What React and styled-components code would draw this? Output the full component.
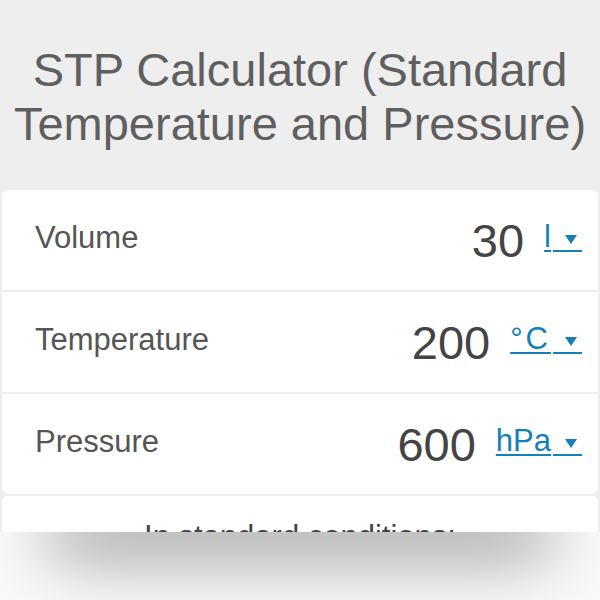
import React from "react";
import styled, { createGlobalStyle } from "styled-components";

const GlobalStyle = createGlobalStyle`
    html, body {
        margin: 0;
        padding: 0;
        background: #fafafa;
    }
    body {
        font-family: "Liberation Sans", Arial, sans-serif;
    }
`;

const rows = [
    { label: "Volume", value: "30", unit: "l" },
    { label: "Temperature", value: "200", unit: "°C", spaced: true },
    { label: "Pressure", value: "600", unit: "hPa" },
];

export default function App() {
    return (
        <Page>
            <GlobalStyle />
            <Frame>
                <Header>STP Calculator (Standard Temperature and Pressure)</Header>
                <Card>
                    {rows.map((row) => (
                        <Row key={row.label}>
                            <Label>{row.label}</Label>
                            <ValueGroup>
                                <Value>{row.value}</Value>
                                <Unit>
                                    <UnitText spaced={row.spaced}>{row.unit}</UnitText>
                                    <Arrow>
                                        <svg width="12" height="9" viewBox="0 0 12 9">
                                            <polygon points="0,0 12,0 6,9" fill="currentColor" />
                                        </svg>
                                    </Arrow>
                                </Unit>
                            </ValueGroup>
                        </Row>
                    ))}
                </Card>
                <ResultCard>In standard conditions:</ResultCard>
            </Frame>
            <ShadowArea />
        </Page>
    );
}

const Page = styled.div`
    width: 600px;
    height: 600px;
    display: flex;
    flex-direction: column;
    overflow: hidden;
`;

const Frame = styled.div`
    height: 532px;
    flex-shrink: 0;
    overflow: hidden;
    background: #eeeeee;
    padding: 0 2px;
    box-sizing: border-box;
`;

const Header = styled.div`
    padding: 43px 4px 39px;
    text-align: center;
    font-size: 47px;
    line-height: 54px;
    color: #5f5f5f;
`;

const Card = styled.div`
    display: flex;
    flex-direction: column;
    gap: 2px;
    border-radius: 6px;
    overflow: hidden;
    background: #eeeeee;
`;

const Row = styled.div`
    height: 100px;
    display: flex;
    align-items: center;
    justify-content: space-between;
    padding: 0 16px 0 33px;
    background: #ffffff;
`;

const Label = styled.div`
    padding-bottom: 4px;
    font-size: 31px;
    color: #555555;
`;

const ValueGroup = styled.div`
    display: flex;
    align-items: center;
    gap: 20px;
`;

const Value = styled.span`
    font-size: 47px;
    color: #444444;
`;

const Unit = styled.span`
    padding-bottom: 6px;
    font-size: 31px;
    color: #147fb8;
    white-space: nowrap;
`;

const UnitText = styled.span`
    letter-spacing: ${(props) => (props.spaced ? "3px" : "0")};
    text-decoration: underline;
    text-decoration-thickness: 2px;
    text-underline-offset: 3px;
`;

const Arrow = styled.span`
    display: inline-block;
    vertical-align: -5px;
    margin-left: 2px;
    padding: 0 5px 0 12px;
    border-bottom: 2px solid #147fb8;

    svg {
        display: block;
        margin-bottom: 6px;
    }
`;

const ResultCard = styled.div`
    margin-top: 2px;
    padding-top: 22px;
    height: 200px;
    border-radius: 6px 6px 0 0;
    background: #ffffff;
    text-align: center;
    font-size: 31px;
    line-height: 1.2;
    color: #444444;
`;

const ShadowArea = styled.div`
    position: relative;
    flex: 1;
    overflow: hidden;
    background: #fafafa;

    &::before {
        content: "";
        position: absolute;
        left: 50px;
        right: 50px;
        top: -40px;
        height: 40px;
        box-shadow: 0 20px 70px 0 rgba(0, 0, 0, 0.5);
    }
`;
